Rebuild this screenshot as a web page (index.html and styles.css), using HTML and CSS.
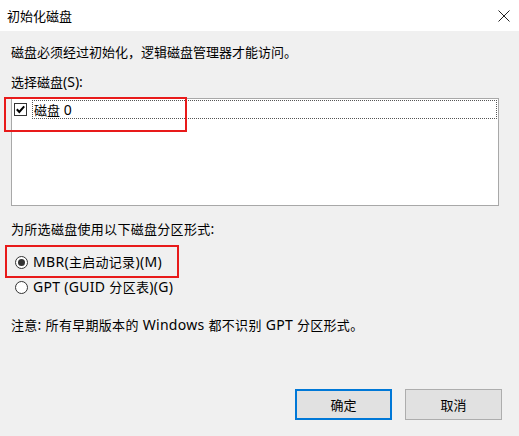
FILE: index.html
```html
<!DOCTYPE html>
<html lang="zh-CN">
<head>
<meta charset="utf-8">
<link rel="stylesheet" href="styles.css">
</head>
<body>
<div class="dialog">
  <div class="titlebar">
    <span class="title">初始化磁盘</span>
    <svg class="close" width="12" height="12" viewBox="0 0 12 12"><path d="M0.5 0.5 L11.5 11.5 M11.5 0.5 L0.5 11.5" stroke="#222" stroke-width="1" fill="none"/></svg>
  </div>
  <div class="content">
    <p class="line intro">磁盘必须经过初始化，逻辑磁盘管理器才能访问。</p>
    <p class="line label">选择磁盘<span class="lt">(S):</span></p>
    <div class="listbox">
      <div class="item">
        <span class="checkbox">
          <svg width="11" height="11" viewBox="0 0 11 11"><path d="M1.8 5.3 L4.3 8 L9.2 2.3" stroke="#000" stroke-width="2" fill="none"/></svg>
        </span>
        <span class="item-text">磁盘<span class="lt"> 0</span></span>
      </div>
    </div>
    <p class="line part-label spaced">为所选磁盘使用以下磁盘分区形式<span class="lt">:</span></p>
    <div class="radio-row mbr"><span class="radio checked"></span><span class="rtext spaced"><span class="lt">MBR(</span>主启动记录<span class="lt">)(M)</span></span></div>
    <div class="radio-row gpt"><span class="radio"></span><span class="rtext spaced"><span class="lt">GPT (GUID </span>分区表<span class="lt">)(G)</span></span></div>
    <p class="line note spaced">注意<span class="lt">: </span>所有早期版本的<span class="lt"> Windows </span>都不识别<span class="lt"> GPT </span>分区形式。</p>
    <div class="buttons">
      <button class="btn default">确定</button>
      <button class="btn">取消</button>
    </div>
  </div>
  <div class="mark mark-disk"></div>
  <div class="mark mark-mbr"></div>
</div>
</body>
</html>
```
FILE: styles.css
```css
* { box-sizing: border-box; }
html, body { margin: 0; padding: 0; }
body {
  width: 519px;
  height: 436px;
  overflow: hidden;
  font-family: "Noto Sans", "Noto Sans CJK SC", sans-serif;
  font-size: 13px;
  color: #000;
}
.lt { font-size: 14px; }
.spaced { letter-spacing: 0.3px; }
.dialog {
  position: relative;
  width: 519px;
  height: 436px;
  background: #f0f0f0;
  display: flex;
  flex-direction: column;
}
.titlebar {
  height: 31px;
  background: #fff;
  display: flex;
  align-items: center;
  justify-content: space-between;
  padding: 0 9px 0 7px;
}
.title { font-size: 13px; line-height: 18px; color: #000; }
.close { display: block; }
.content {
  flex: 1;
  display: flex;
  flex-direction: column;
  padding: 12px 17px 16px 11px;
}
.line { margin: 0; line-height: 18px; height: 18px; white-space: nowrap; }
.label { margin-top: 12px; }
.listbox {
  margin-top: 7px;
  margin-right: 3px;
  height: 108px;
  background: #fff;
  border: 1px solid #a8a8a8;
  padding: 1px 1px 0 2px;
}
.item {
  display: flex;
  align-items: center;
  height: 19px;
}
.checkbox {
  width: 13px;
  height: 13px;
  border: 1px solid #333;
  background: #fff;
  display: flex;
  align-items: center;
  justify-content: center;
  flex: none;
}
.checkbox svg { display: block; }
.item-text {
  flex: 1;
  height: 19px;
  margin-left: 5px;
  line-height: 17px;
  padding-left: 1px;
  border: 1px dotted #555;
  white-space: nowrap;
}
.part-label { margin-top: 14px; }
.radio-row {
  display: flex;
  align-items: center;
  height: 18px;
  line-height: 18px;
  padding-left: 4px;
  gap: 5px;
  white-space: nowrap;
}
.rtext { line-height: 18px; }
.mbr { margin-top: 15px; }
.gpt { margin-top: 7px; }
.radio {
  width: 13px;
  height: 13px;
  border: 1px solid #333;
  border-radius: 50%;
  background: #fff;
  display: flex;
  align-items: center;
  justify-content: center;
  flex: none;
}
.radio.checked::after {
  content: "";
  width: 7px;
  height: 7px;
  border-radius: 50%;
  background: #333;
}
.note { margin-top: 20px; }
.buttons {
  margin-top: auto;
  display: flex;
  justify-content: flex-end;
  gap: 13px;
}
.btn {
  width: 97px;
  height: 31px;
  background: #e1e1e1;
  border: 1px solid #adadad;
  font-family: inherit;
  font-size: 13px;
  color: #000;
  padding: 0;
}
.btn.default { border: 2px solid #0078d7; }
.mark {
  position: absolute;
  border: 2px solid #e81a1a;
}
.mark-disk { left: 4px; top: 97px; width: 183px; height: 35px; }
.mark-mbr { left: 5px; top: 245px; width: 174px; height: 33px; }
```
